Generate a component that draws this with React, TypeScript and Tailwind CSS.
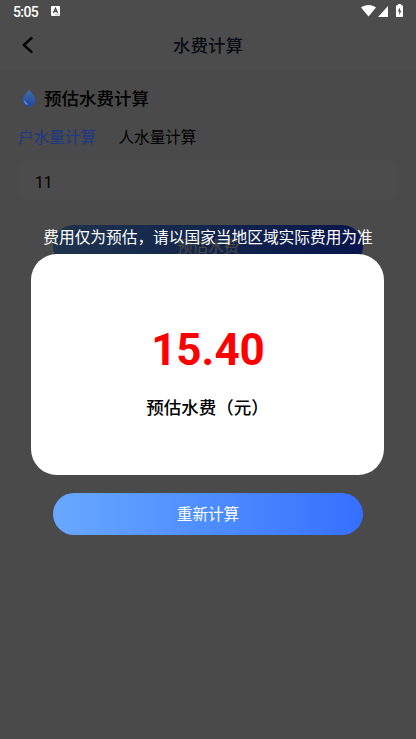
import { useState } from 'react';

const TABS = ['户水量计算', '人水量计算'];

function StatusBar() {
  return (
    <div className="flex h-6 items-center justify-between pr-[13px] pl-[13px] text-white">
      <div className="flex items-center">
        <span className="-mt-px w-[26px] text-[14px] leading-6 font-medium tracking-[-0.6px]">5:05</span>
        <svg width="9" height="10" viewBox="0 0 9 10" className="ml-[12px] -mt-[2px]">
          <rect width="9" height="10" rx="1" fill="#fff" />
          <path d="M2.4 7 4.5 2.3 6.6 7M3.1 5.4h2.8" stroke="#444" strokeWidth="1.2" fill="none" />
          <path d="M4.5 8.7h1M6.5 8.7h1" stroke="#444" strokeWidth=".8" />
        </svg>
      </div>
      <div className="flex items-center">
        <svg width="15" height="12" viewBox="0 0 15 12" className="-mt-[2px]">
          <path d="M7.5 11.6 0 2.6C2 .9 4.6 0 7.5 0S13 .9 15 2.6Z" fill="#fff" />
        </svg>
        <svg width="10" height="11" viewBox="0 0 10 11" className="ml-[2px] -mt-px">
          <path d="M10 0v11H0Z" fill="#fff" />
        </svg>
        <svg width="7" height="13" viewBox="0 0 7 13" className="ml-[8px] -mt-[3px]">
          <path d="M2 0h3v1.3h1.3q.7 0 .7.7v10.2q0 .8-.8.8H.8q-.8 0-.8-.8V2q0-.7.7-.7H2Z" fill="#fff" />
          <path d="M4 3.6 1.7 7.6h1.5V11l2.2-4.3H4Z" fill="#4d4d4d" />
        </svg>
      </div>
    </div>
  );
}

function DropIcon() {
  return (
    <svg width="14" height="18" viewBox="0 0 14 18">
      <defs>
        <linearGradient id="drop" x1="0" y1="0" x2="0" y2="1">
          <stop offset="0" stopColor="#3c6ea3" />
          <stop offset="1" stopColor="#2348a0" />
        </linearGradient>
      </defs>
      <path d="M7 .5C9 3 13.5 7.5 13.5 11.2A6.4 6.3 0 0 1 7 17.4 6.4 6.3 0 0 1 .5 11.2C.5 7.5 5 3 7 .5Z" fill="url(#drop)" />
      <path d="M2.6 12Q3.3 14.6 5.2 15.2" stroke="#6f8fc8" strokeWidth="1.1" strokeLinecap="round" fill="none" />
    </svg>
  );
}

export default function App() {
  const [tab, setTab] = useState(0);
  const [amount, setAmount] = useState('11');

  return (
    <div className="relative h-[739px] w-[416px] overflow-hidden bg-[#f7f7f7] font-[Roboto,'Noto_Sans_CJK_SC',sans-serif]">
      {/* Page */}
      <header className="flex h-[69px] items-center bg-white px-[22px] pt-[22px]">
        <svg width="11" height="16" viewBox="0 0 11 16" className="-mt-px shrink-0">
          <path d="M9.5 1.2 1.8 8l7.7 6.8" stroke="#000" strokeWidth="2.4" strokeLinecap="round" strokeLinejoin="round" fill="none" />
        </svg>
        <h1 className="flex-1 pr-[11px] text-center text-[17.5px] leading-6 font-medium text-[#1f2c4a]">水费计算</h1>
      </header>

      <main className="px-[18px] pt-[18px]">
        <div className="flex h-6 items-center gap-2 pl-1">
          <div className="relative z-10 -mt-[3px]">
            <DropIcon />
          </div>
          <h2 className="text-[17.5px] leading-6 font-medium text-black">预估水费计算</h2>
        </div>

        <div className="mt-[15px] flex gap-[22.5px]">
          {TABS.map((name, i) => (
            <button
              key={name}
              onClick={() => setTab(i)}
              className={tab === i ? 'relative z-10 text-[15.6px] leading-6 text-[#1c3887]' : 'text-[15.6px] leading-6 text-black'}
            >
              {name}
            </button>
          ))}
        </div>

        <input
          value={amount}
          onChange={(e) => setAmount(e.target.value)}
          className="mt-[11px] block h-[39px] w-full rounded-[10px] bg-[#fdfdfd] px-[17px] pt-[4px] text-[15.6px] text-black outline-none"
        />

        <button className="mx-auto mt-[25px] block h-[42px] w-[310px] rounded-full bg-linear-to-r from-[#69a8ff] to-[#1f45ff] pt-[4px] text-[15.6px] text-[#fff0d8]">
          预估水费
        </button>
      </main>

      {/* Result dialog */}
      <div className="absolute inset-0 bg-black/70">
        <StatusBar />
        <div className="flex flex-col items-center pt-[202px]">
          <p className="text-[15.7px] leading-6 whitespace-nowrap text-white">费用仅为预估，请以国家当地区域实际费用为准</p>
          <div className="mt-[3.5px] mr-px flex h-[221.5px] w-[353px] flex-col items-center rounded-[26px] bg-white pt-[70.5px]">
            <div className="pl-px text-[44px] leading-[52px] font-bold text-[#ff0000]">15.40</div>
            <div className="mt-[20px] text-[17.5px] leading-6 font-medium text-black">预估水费（元）</div>
          </div>
          <button className="mt-[18px] h-[42px] w-[310px] rounded-full bg-linear-to-r from-[#69a8ff] to-[#366fff] pt-[3px] text-[15.6px] text-white">
            重新计算
          </button>
        </div>
      </div>
    </div>
  );
}
